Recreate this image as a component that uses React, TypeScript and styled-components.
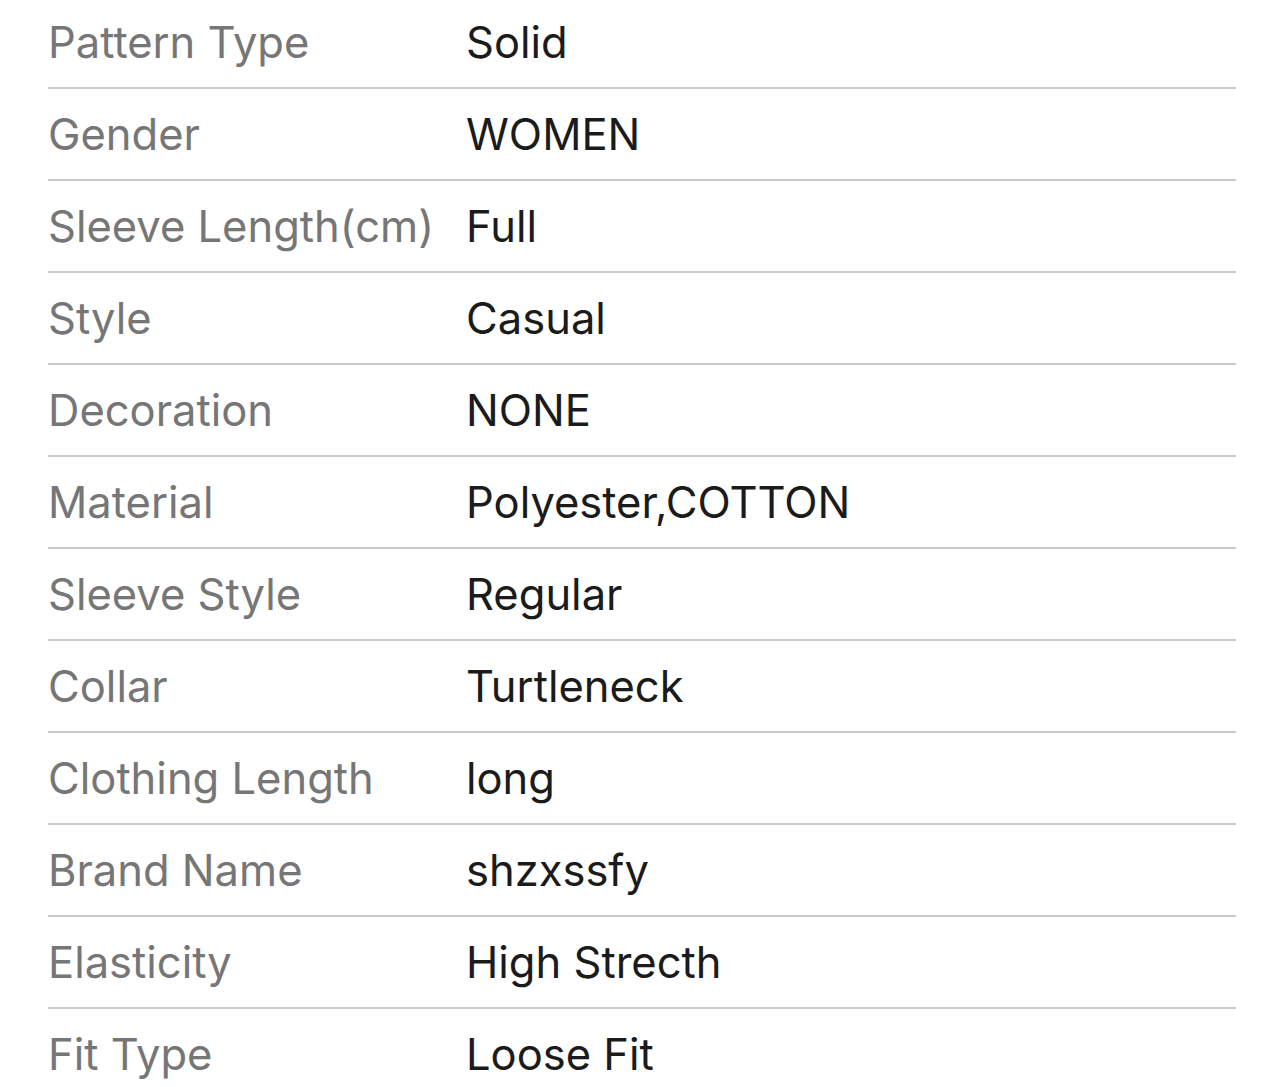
import React from "react";
import styled, { createGlobalStyle } from "styled-components";

const Global = createGlobalStyle`
  html, body { margin: 0; padding: 0; background: #ffffff; }
  body { font-family: Inter, "Noto Sans", "Liberation Sans", sans-serif; overflow: hidden; }
`;

const Page = styled.div`
  width: 1284px;
  height: 1087px;
  overflow: hidden;
  background: #ffffff;
`;

const List = styled.dl`
  margin: -3px 0 0 48px;
  width: 1188px;
  padding: 0;
`;

const Row = styled.div`
  display: grid;
  grid-template-columns: 418px 1fr;
  align-items: center;
  height: 90px;
  border-bottom: 2px solid #c9c9c9;
`;

const Label = styled.dt`
  margin: 0;
  padding-left: 0;
  font-size: 43.5px;
  color: #767676;
  white-space: nowrap;
`;

const Value = styled.dd`
  margin: 0;
  font-size: 43.5px;
  color: #1b1b1b;
  white-space: nowrap;
`;

const rows: [string, string][] = [
  ["Pattern Type", "Solid"],
  ["Gender", "WOMEN"],
  ["Sleeve Length(cm)", "Full"],
  ["Style", "Casual"],
  ["Decoration", "NONE"],
  ["Material", "Polyester,COTTON"],
  ["Sleeve Style", "Regular"],
  ["Collar", "Turtleneck"],
  ["Clothing Length", "long"],
  ["Brand Name", "shzxssfy"],
  ["Elasticity", "High Strecth"],
  ["Fit Type", "Loose Fit"],
];

export default function App() {
  return (
    <Page>
      <Global />
      <List>
        {rows.map(([k, v]) => (
          <Row key={k}>
            <Label>{k}</Label>
            <Value>{v}</Value>
          </Row>
        ))}
      </List>
    </Page>
  );
}
